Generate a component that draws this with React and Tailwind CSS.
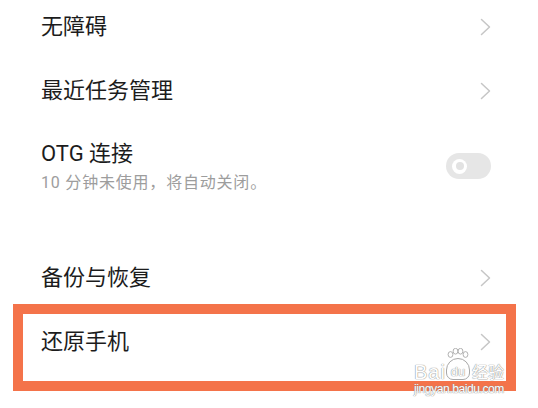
import React from 'react'

const FONT = { fontFamily: 'Roboto, "Noto Sans CJK SC", sans-serif' }
const LATIN = { fontFamily: '"Liberation Sans", sans-serif' }

function Chevron() {
  return (
    <svg width="11" height="18" viewBox="0 0 11 18" fill="none" className="shrink-0">
      <path d="M1.5 1.5 L9.5 9 L1.5 16.5" stroke="#c6c6c6" strokeWidth="1.5" strokeLinecap="round" strokeLinejoin="round" />
    </svg>
  )
}

function Toggle() {
  return (
    <div className="flex h-[26px] w-[45px] shrink-0 items-center rounded-full bg-[#e6e6e6] pl-[6px]">
      <div className="flex h-[15px] w-[15px] items-center justify-center rounded-full bg-white">
        <div className="h-[8px] w-[8px] rounded-full bg-[#e2e2e2]" />
      </div>
    </div>
  )
}

// baidu jingyan watermark over the bottom right corner
function Watermark() {
  const outline = '[text-shadow:0_0_1px_#8c8c8c,0_0_1px_#8c8c8c]'
  return (
    <div className="pointer-events-none absolute left-[414px] top-[348px] flex flex-col items-start">
      <div className="flex items-end">
        <span className={`text-[20px] leading-[15px] tracking-[1px] text-white ${outline}`} style={LATIN}>
          Bai
        </span>
        <div className="flex w-[24px] flex-col items-center">
          <svg width="24" height="10" viewBox="0 0 24 10" fill="none">
            <ellipse cx="4.5" cy="6.5" rx="2.4" ry="2.9" stroke="#a8a8a8" strokeWidth="0.9" fill="rgba(255,255,255,0.7)" />
            <ellipse cx="9.5" cy="3.2" rx="2.4" ry="2.9" stroke="#a8a8a8" strokeWidth="0.9" fill="rgba(255,255,255,0.7)" />
            <ellipse cx="14.5" cy="3.2" rx="2.4" ry="2.9" stroke="#a8a8a8" strokeWidth="0.9" fill="rgba(255,255,255,0.7)" />
            <ellipse cx="19.5" cy="6.5" rx="2.4" ry="2.9" stroke="#a8a8a8" strokeWidth="0.9" fill="rgba(255,255,255,0.7)" />
          </svg>
          <div className="flex h-[22px] w-[24px] items-end justify-center rounded-t-[12px] rounded-b-[7px] border border-[#a8a8a8] bg-white/70 pb-[1px]">
            <span className={`text-[13px] leading-[13px] text-white ${outline}`} style={LATIN}>
              du
            </span>
          </div>
        </div>
        <span className={`ml-[2px] text-[16px] leading-[15px] text-white ${outline}`} style={FONT}>
          经验
        </span>
      </div>
      <span className={`mt-[3px] text-[12px] leading-[12px] tracking-[-0.4px] text-white ${outline}`} style={LATIN}>
        jingyan.baidu.com
      </span>
    </div>
  )
}

export default function App() {
  return (
    <div className="relative h-[408px] w-[538px] overflow-hidden bg-white" style={FONT}>
      <div className="flex h-[59px] items-center justify-between pb-[5px] pl-[41px] pr-[47px]">
        <span className="text-[22px] leading-[30px] text-[#1c1c1c]">无障碍</span>
        <Chevron />
      </div>

      <div className="flex h-[64px] items-center justify-between pl-[41px] pr-[47px]">
        <span className="text-[22px] leading-[30px] text-[#1c1c1c]">最近任务管理</span>
        <Chevron />
      </div>

      <div className="h-[123px] pt-[16px]">
        <div className="flex items-center justify-between pl-[41px] pr-[47px]">
          <div className="flex flex-col">
            <span className="text-[22px] leading-[30px] text-[#1c1c1c]">OTG 连接</span>
            <span className="mt-[4px] text-[16px] leading-[20px] tracking-[0.8px] text-[#9d9d9d]">10 分钟未使用，将自动关闭。</span>
          </div>
          <Toggle />
        </div>
      </div>

      <div className="flex h-[58px] items-center justify-between pl-[41px] pr-[47px] pt-[6px]">
        <span className="text-[22px] leading-[30px] text-[#1c1c1c]">备份与恢复</span>
        <Chevron />
      </div>

      <div className="ml-[13px] flex h-[87px] w-[503px] items-center justify-between border-[10px] border-[#f4734a] pb-[12px] pl-[18px] pr-[15px]">
        <span className="text-[22px] leading-[30px] text-[#1c1c1c]">还原手机</span>
        <Chevron />
      </div>

      <Watermark />
    </div>
  )
}
